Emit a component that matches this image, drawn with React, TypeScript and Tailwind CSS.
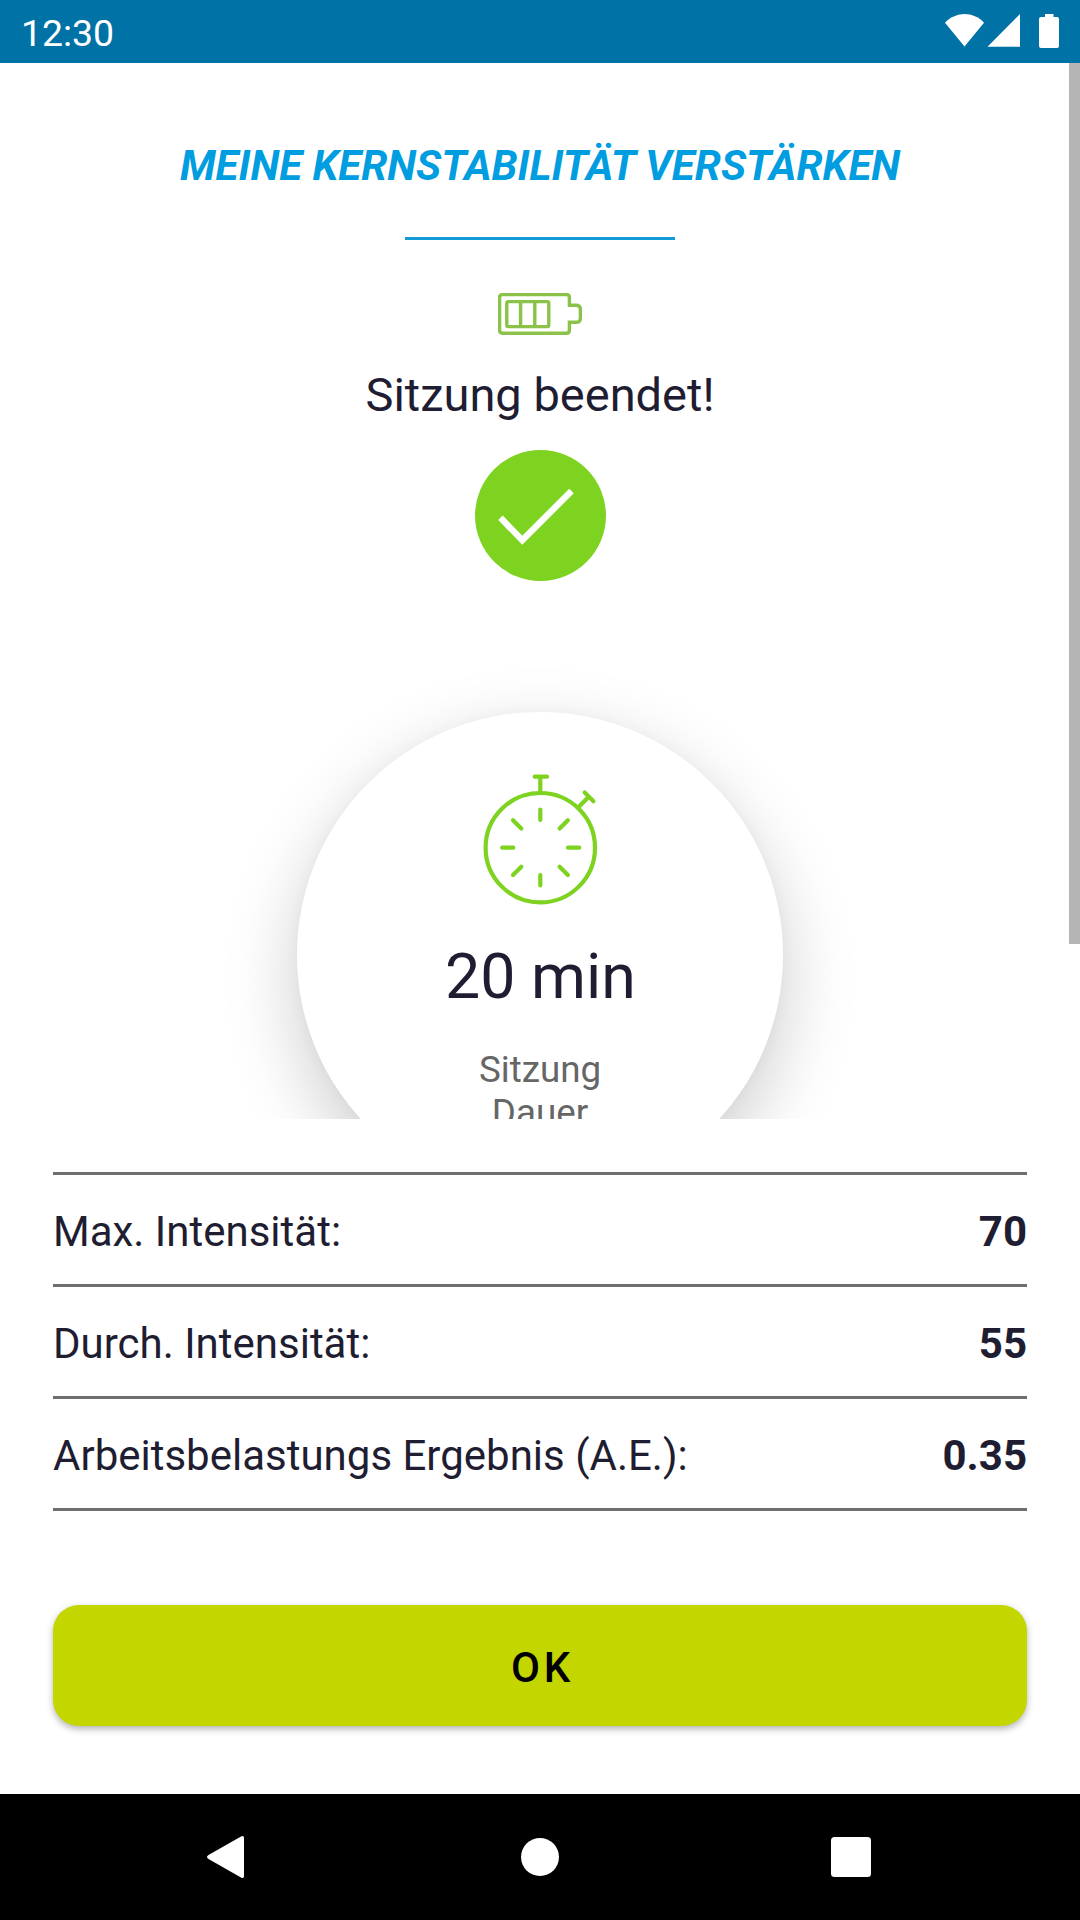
const FONT = "font-['Roboto',sans-serif]";

const results = [
  { label: 'Max. Intensität:', value: '70' },
  { label: 'Durch. Intensität:', value: '55' },
  { label: 'Arbeitsbelastungs Ergebnis (A.E.):', value: '0.35' },
];

function StatusBar() {
  return (
    <header className="flex h-[63px] shrink-0 items-center justify-between bg-[#0072a6] pl-[21px] text-white">
      <span className="pt-[2px] text-[37.400px] leading-[60px]">12:30</span>
      <svg width="140" height="63" viewBox="940 0 140 63" fill="#fff">
        <path d="M945 22.7C956.5 11.2 973 11.2 984 22.7L964.5 46.5Z" />
        <path d="M1020 14V46.7H987.5Z" />
        <path d="M1045 14h8.500v3h3.500q2 0 2 2v27q0 2-2 2h-16q-2 0-2-2v-27q0-2 2-2h4Z" />
      </svg>
    </header>
  );
}

function EnergyIcon() {
  return (
    <svg className="shrink-0" width="84" height="42" viewBox="0 0 84 42" fill="none" stroke="#8bc34a" strokeWidth="3.400">
      <path d="M4.500 1.600H68.500Q71.400 1.600 71.400 4.500V12.200H78Q82.400 12.200 82.400 16.500V25Q82.400 29.300 78 29.300H71.400V37Q71.400 40.300 68.500 40.300H4.500Q1.600 40.300 1.600 37V4.500Q1.600 1.600 4.500 1.600Z" />
      <rect x="8.800" y="8.600" width="42" height="25" rx="1.500" />
      <path d="M22.600 8.600V33.600M36.800 8.600V33.600" />
    </svg>
  );
}

function DoneIcon() {
  return (
    <svg className="shrink-0" width="131" height="131" viewBox="0 0 131 131">
      <circle cx="65.500" cy="65.500" r="65.500" fill="#7ed321" />
      <path d="M25.500 67.800L47.300 90.200L96.500 41" fill="none" stroke="#fff" strokeWidth="6.400" />
    </svg>
  );
}

function StopwatchIcon() {
  return (
    <svg className="shrink-0" width="120" height="136" viewBox="480 770 120 136" fill="none" stroke="#7ed321" strokeWidth="4.200" strokeLinecap="round">
      <circle cx="540.300" cy="847.700" r="54.700" />
      <path d="M534.700 776.700H547M540.300 777V792M578.700 807L587.500 798M584.700 792.600L593.400 801.200" />
      <path d="M540.300 809.500V820M540.300 875V885.500M502.200 847.700H513.300M568 847.700H579.200" />
      <path d="M513 820.200L521.300 828.500M567.900 820.200L559.600 828.500M513 875L521.300 866.700M567.900 875L559.600 866.700" />
    </svg>
  );
}

export default function App() {
  return (
    <div className={`flex h-[1920px] w-[1080px] flex-col overflow-hidden bg-white text-[#1f1d31] ${FONT}`}>
      <StatusBar />

      <main className="relative flex h-[1056px] shrink-0 flex-col items-center overflow-hidden">
        <h1 className="mt-[78px] text-[42px] font-bold italic leading-[49px] whitespace-nowrap text-[#009de0]">
          MEINE KERNSTABILITÄT VERSTÄRKEN
        </h1>
        <div className="mt-[47px] mb-[53px] h-[3px] w-[270px] shrink-0 bg-[#139bd8]" />
        <EnergyIcon />
        <p className="mt-[32px] mb-[27px] text-[47px] leading-[56px]">Sitzung beendet!</p>
        <DoneIcon />
        <section className="mt-[131px] flex h-[486px] w-[486px] shrink-0 flex-col items-center rounded-full bg-white pt-[58px] shadow-[0_26px_74px_rgba(0,0,0,0.2),0_0_16px_rgba(0,0,0,0.03)]">
          <StopwatchIcon />
          <p className="mt-[34px] pl-px text-[62.700px] leading-[74px]">20 min</p>
          <p className="mt-[34px] text-center text-[36.750px] leading-[43px] text-[#666666]">
            Sitzung
            <br />
            Dauer
          </p>
        </section>
        <div className="absolute top-0 right-0 h-[881px] w-[11px] bg-[#b5b5b5]" />
      </main>

      <dl className="mx-[53px] mt-[53px] shrink-0 border-t-[3px] border-[#6e6e6e]">
        {results.map((r) => (
          <div key={r.label} className="flex h-[112px] items-center justify-between border-b-[3px] border-[#6e6e6e] pt-[3px] text-[42px]">
            <dt>{r.label}</dt>
            <dd className="font-bold">{r.value}</dd>
          </div>
        ))}
      </dl>

      <button className="mx-[53px] mt-[94px] flex h-[121px] shrink-0 items-center justify-center rounded-[26px] bg-[#c4d600] pt-[3px] pl-[5px] text-[42px] font-medium tracking-[3.750px] text-black shadow-[0_3px_7px_rgba(0,0,0,0.3)]">
        OK
      </button>

      <nav className="mt-auto h-[126px] shrink-0 bg-black">
        <svg width="1080" height="126" viewBox="0 1794 1080 126" fill="#fff">
          <path d="M241 1836.500Q244 1835 244 1838V1876Q244 1879 241 1877.500L208.500 1859Q205.500 1857 208.500 1855Z" />
          <circle cx="540" cy="1857" r="19" />
          <rect x="831" y="1837" width="40" height="40" rx="3.500" />
        </svg>
      </nav>
    </div>
  );
}
